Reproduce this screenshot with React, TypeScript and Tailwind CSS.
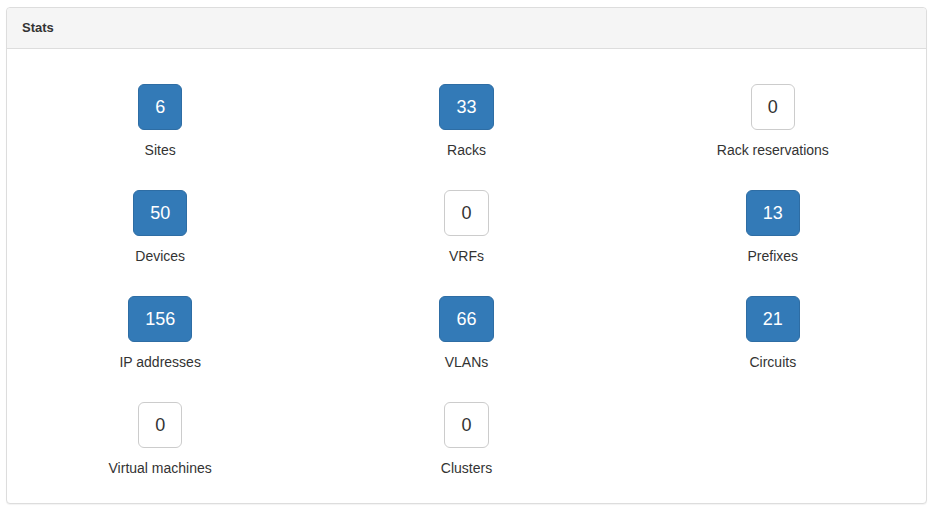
import React from 'react';

type Stat = { label: string; count: number };

const stats: Stat[] = [
  { label: 'Sites', count: 6 },
  { label: 'Racks', count: 33 },
  { label: 'Rack reservations', count: 0 },
  { label: 'Devices', count: 50 },
  { label: 'VRFs', count: 0 },
  { label: 'Prefixes', count: 13 },
  { label: 'IP addresses', count: 156 },
  { label: 'VLANs', count: 66 },
  { label: 'Circuits', count: 21 },
  { label: 'Virtual machines', count: 0 },
  { label: 'Clusters', count: 0 },
];

const App: React.FC = () => {
  return (
    <div className="min-h-screen bg-white pt-[7px] pl-[6px] font-['Liberation_Sans',Arial,sans-serif] text-[#333]">
      <div className="w-[921px] rounded border border-[#ddd] bg-white shadow-[0_1px_1px_rgba(0,0,0,0.05)]">
        {/* Heading */}
        <div className="rounded-t border-b border-[#ddd] bg-[#f5f5f5] px-[15px] py-[10px] text-[13px] leading-5 font-bold">
          Stats
        </div>

        {/* Body */}
        <div className="grid grid-cols-3 pt-[15px] pb-[15px]">
          {stats.map((s) => (
            <div key={s.label} className="flex flex-col items-center">
              <div
                className={`mt-5 mb-[10px] flex h-[46px] items-center justify-center rounded-md border px-4 text-[18px] ${
                  s.count > 0
                    ? 'border-[#2e6da4] bg-[#337ab7] text-white'
                    : 'border-[#ccc] bg-white text-[#333]'
                }`}
              >
                {s.count}
              </div>
              <p className="mb-[10px] text-sm leading-5">{s.label}</p>
            </div>
          ))}
        </div>
      </div>
    </div>
  );
};

export default App;
